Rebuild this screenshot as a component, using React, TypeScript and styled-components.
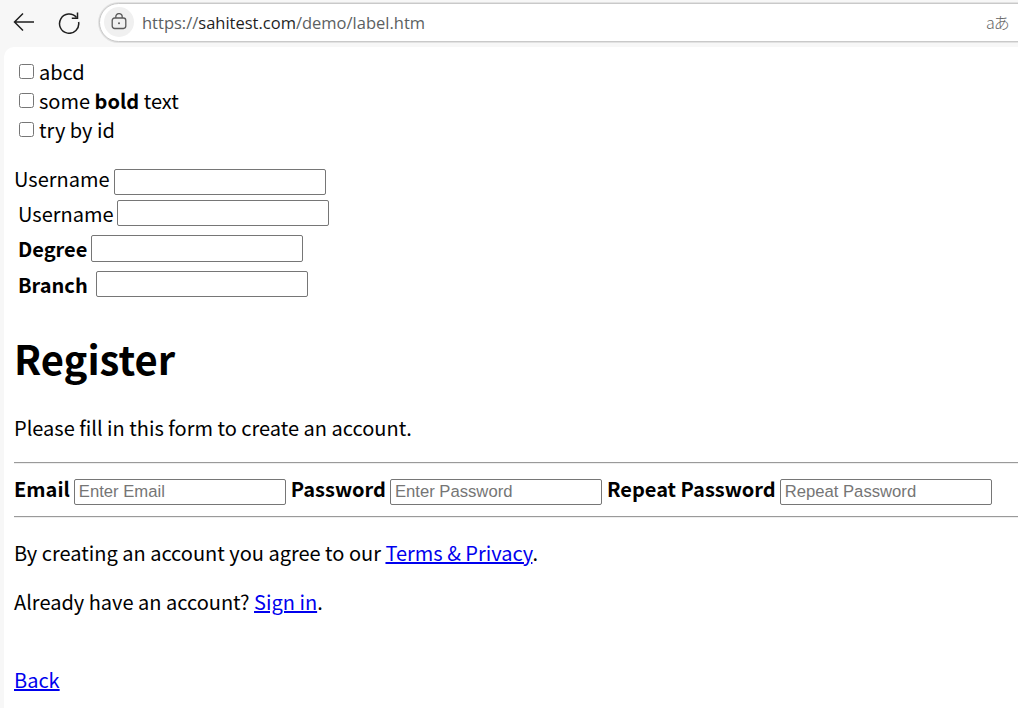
import { FC } from 'react'
import styled, { createGlobalStyle } from 'styled-components'

const bodyFont = `'Noto Sans CJK JP', 'Noto Sans', sans-serif`

const GlobalStyle = createGlobalStyle`
  html, body {
    margin: 0;
    padding: 0;
    height: 100%;
    overflow: hidden;
    background: #f7f7f7;
  }
`

const BackIcon: FC = () => (
  <svg width="24" height="24" viewBox="0 0 24 24" fill="none" stroke="#1f1f1f" strokeWidth="1.5">
    <path d="M22 12H3M11 3.5L2.5 12l8.500 8.500" />
  </svg>
)

const ReloadIcon: FC = () => (
  <svg width="24" height="24" viewBox="0 0 24 24" fill="none" stroke="#1f1f1f" strokeWidth="1.5">
    <path d="M19.500 7.500A9.600 9.600 0 1 0 21.600 12" />
    <path d="M20.500 2.500v5.700h-5.700" />
  </svg>
)

const LockIcon: FC = () => (
  <svg width="18" height="18" viewBox="0 0 18 18" fill="none" stroke="#5a5a5a" strokeWidth="1.300">
    <rect x="2.200" y="5" width="13.600" height="10.500" rx="2.400" />
    <path d="M5.800 5V3.800a3.200 3.200 0 0 1 6.400 0V5" />
    <circle cx="9" cy="10.200" r="1" fill="#5a5a5a" stroke="none" />
  </svg>
)

export default function App() {
  return (
    <>
      <GlobalStyle />
      <Toolbar>
        <NavButton>
          <BackIcon />
        </NavButton>
        <NavButton>
          <ReloadIcon />
        </NavButton>
        <AddressBar>
          <LockBadge>
            <LockIcon />
          </LockBadge>
          <Url>
            <UrlDim>https://</UrlDim>sahitest.com<UrlDim>/demo/label.htm</UrlDim>
          </Url>
          <TranslateGlyph>aあ</TranslateGlyph>
        </AddressBar>
      </Toolbar>
      <Page>
        <CheckList>
          <CheckRow>
            <CheckBox type="checkbox" />
            abcd
          </CheckRow>
          <CheckRow>
            <CheckBox type="checkbox" />
            <span>
              some <b>bold</b> text
            </span>
          </CheckRow>
          <CheckRow>
            <CheckBox type="checkbox" />
            try by id
          </CheckRow>
        </CheckList>
        <FirstField>
          Username
          <TextBox type="text" />
        </FirstField>
        <FieldTable>
          <FieldRow $gap={3}>
            Username
            <TextBox type="text" />
          </FieldRow>
          <FieldRow $gap={4} $tall>
            <b>Degree</b>
            <TextBox type="text" $tall />
          </FieldRow>
          <FieldRow $gap={8}>
            <b>Branch</b>
            <TextBox type="text" />
          </FieldRow>
        </FieldTable>
        <Title>Register</Title>
        <Intro>Please fill in this form to create an account.</Intro>
        <Rule />
        <RegisterRow>
          <b>Email</b>
          <TextBox type="text" placeholder="Enter Email" />
          <b>Password</b>
          <TextBox type="password" placeholder="Enter Password" />
          <b>Repeat Password</b>
          <TextBox type="password" placeholder="Repeat Password" />
        </RegisterRow>
        <SecondRule />
        <Terms>
          By creating an account you agree to our <a href="#terms">Terms &amp; Privacy</a>.
        </Terms>
        <SignIn>
          Already have an account? <a href="#signin">Sign in</a>.
        </SignIn>
        <BackLink href="#back">Back</BackLink>
      </Page>
    </>
  )
}

const Toolbar = styled('div')`
  display: flex;
  align-items: center;
  height: 47px;
  padding: 0 0 3px 12px;
  box-sizing: border-box;
  background: #f7f7f7;
`

const NavButton = styled('div')`
  display: flex;
  align-items: center;
  justify-content: center;
  width: 24px;
  height: 24px;
  margin-right: 21px;
`

const AddressBar = styled('div')`
  display: flex;
  align-items: center;
  flex: 1;
  height: 39px;
  margin-left: -3px;
  margin-right: -30px;
  padding-left: 4px;
  box-sizing: border-box;
  background: #fff;
  border: 1px solid #c9c9c9;
  border-radius: 20px;
  box-shadow: 0 0 0 1px #e2e2e2;
`

const LockBadge = styled('div')`
  display: flex;
  align-items: center;
  justify-content: center;
  width: 30px;
  height: 30px;
  border-radius: 50%;
  background: #f0f0f0;
`

const Url = styled('div')`
  margin-left: 8px;
  font-family: 'Open Sans', sans-serif;
  font-size: 16.500px;
  color: #1f1f1f;
`

const UrlDim = styled('span')`
  color: #5c5f62;
`

const TranslateGlyph = styled('div')`
  margin-left: 561px;
  font-family: 'Noto Sans CJK JP', sans-serif;
  font-size: 16px;
  font-weight: 300;
  letter-spacing: -1px;
  color: #666;
`

const Page = styled('div')`
  height: 661px;
  margin-left: 4px;
  padding: 10px 0 0 10px;
  box-sizing: border-box;
  overflow: hidden;
  background: #fff;
  border-top-left-radius: 10px;
  font-family: ${bodyFont};
  font-size: 20px;
  line-height: 29px;
  color: #000;

  a {
    color: #0000ee;
  }
`

const CheckList = styled('div')`
  display: flex;
  flex-direction: column;
  padding-left: 5px;
`

const CheckRow = styled('label')`
  display: flex;
  align-items: center;
  gap: 5px;
  height: 29px;

  b {
    font-weight: 700;
  }
`

const CheckBox = styled('input')`
  width: 15px;
  height: 15px;
  margin: 0 0 1px;
`

const TextBox = styled('input')<{ $tall?: boolean }>`
  flex: none;
  width: 212px;
  height: ${({ $tall }) => ($tall ? '27px' : '26px')};
  padding: 1px 4px;
  box-sizing: border-box;
  border: 1px solid #767676;
  border-radius: 2px;
  background: #fff;
  font-family: 'Liberation Sans', Arial, sans-serif;
  font-size: 16.670px;
  outline: none;

  &::placeholder {
    color: #757575;
  }
`

const FirstField = styled('div')`
  display: flex;
  align-items: baseline;
  gap: 4px;
  height: 26px;
  margin-top: 20px;
`

const FieldTable = styled('div')`
  display: flex;
  flex-direction: column;
  gap: 9px;
  margin-top: 10px;
  padding-left: 4px;
`

const FieldRow = styled('div')<{ $gap: number; $tall?: boolean }>`
  display: flex;
  align-items: center;
  gap: ${({ $gap }) => $gap}px;
  height: ${({ $tall }) => ($tall ? '27px' : '26px')};
`

const Title = styled('h1')`
  margin: 31px 0 0;
  font-size: 40px;
  line-height: 60px;
  font-weight: 700;
`

const Intro = styled('p')`
  margin: 25px 0 0;
`

const Rule = styled('hr')`
  margin: 20px 0 0;
  border: none;
  border-top: 1px solid #9a9a9a;
  border-bottom: 1px solid #eee;
`

const SecondRule = styled(Rule)`
  margin-top: 16px;
`

const RegisterRow = styled('div')`
  display: flex;
  align-items: baseline;
  gap: 4px;
  height: 26px;
  margin-top: 10px;

  b {
    flex: none;
  }

  input + b {
    margin-left: 1px;
  }
`

const Terms = styled('p')`
  margin: 20px 0 0;
`

const SignIn = styled('p')`
  margin: 20px 0 0;
`

const BackLink = styled('a')`
  display: block;
  margin-top: 49px;
`
